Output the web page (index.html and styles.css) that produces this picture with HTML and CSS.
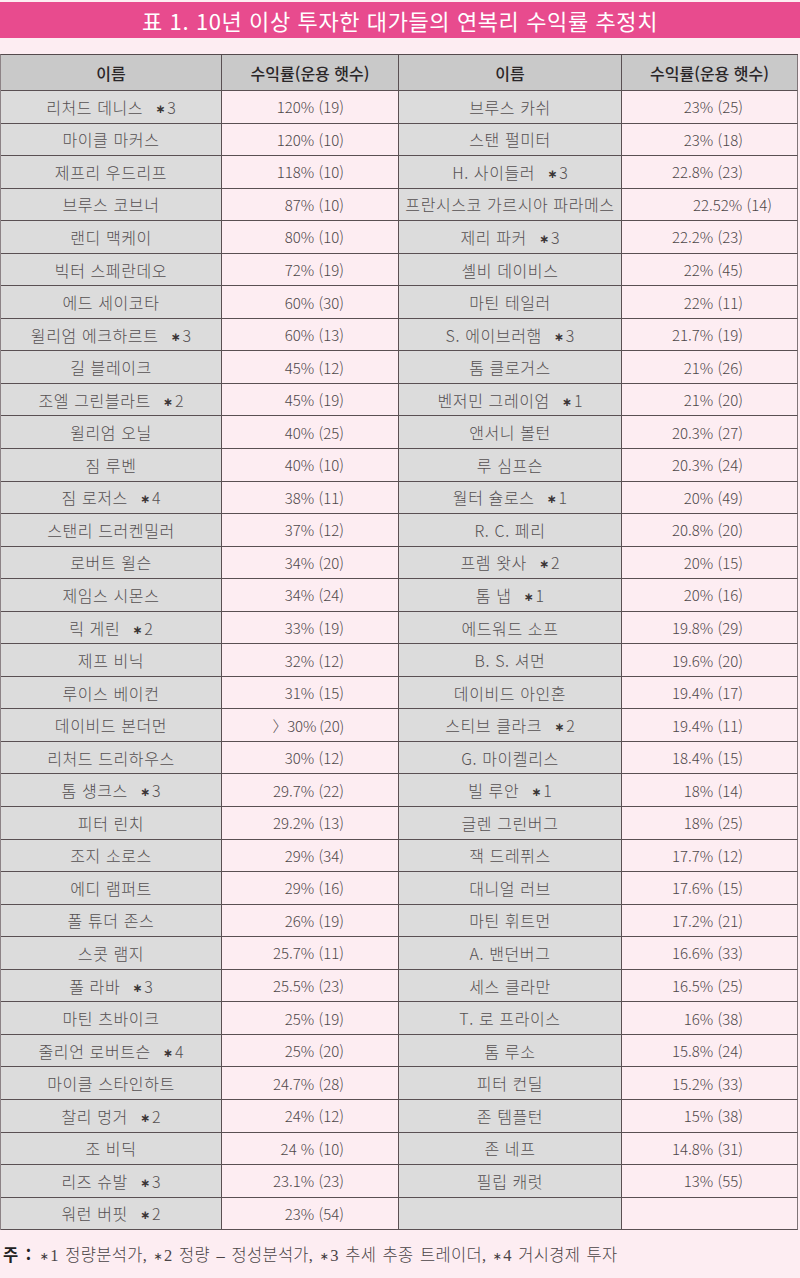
FILE: index.html
```html
<!DOCTYPE html>
<html lang="ko">
<head>
<meta charset="utf-8">
<title>표 1</title>
<link rel="stylesheet" href="styles.css">
</head>
<body>
<div class="page">
  <h1 class="title">표 1. 10년 이상 투자한 대가들의 연복리 수익률 추정치</h1>
  <div class="tbl" id="tbl">
    <div class="th">이름</div><div class="th">수익률(운용 햇수)</div><div class="th">이름</div><div class="th">수익률(운용 햇수)</div>
  </div>
  <p class="note"><b>주 :</b> <span class="ser"><span class="ast">∗</span>1 정량분석가, <span class="ast">∗</span>2 정량 – 정성분석가, <span class="ast">∗</span>3 추세 추종 트레이더, <span class="ast">∗</span>4 거시경제 투자</span></p>
</div>
<script src="app.js"></script>
</body>
</html>
```

FILE: app.js
```js
const left = [
  ["리처드 데니스", "3", "120% (19)"],
  ["마이클 마커스", "", "120% (10)"],
  ["제프리 우드리프", "", "118% (10)"],
  ["브루스 코브너", "", "87% (10)"],
  ["랜디 맥케이", "", "80% (10)"],
  ["빅터 스페란데오", "", "72% (19)"],
  ["에드 세이코타", "", "60% (30)"],
  ["윌리엄 에크하르트", "3", "60% (13)"],
  ["길 블레이크", "", "45% (12)"],
  ["조엘 그린블라트", "2", "45% (19)"],
  ["윌리엄 오닐", "", "40% (25)"],
  ["짐 루벤", "", "40% (10)"],
  ["짐 로저스", "4", "38% (11)"],
  ["스탠리 드러켄밀러", "", "37% (12)"],
  ["로버트 윌슨", "", "34% (20)"],
  ["제임스 시몬스", "", "34% (24)"],
  ["릭 게린", "2", "33% (19)"],
  ["제프 비닉", "", "32% (12)"],
  ["루이스 베이컨", "", "31% (15)"],
  ["데이비드 본더먼", "", "〉30% (20)", "gt"],
  ["리처드 드리하우스", "", "30% (12)"],
  ["톰 섕크스", "3", "29.7% (22)"],
  ["피터 린치", "", "29.2% (13)"],
  ["조지 소로스", "", "29% (34)"],
  ["에디 램퍼트", "", "29% (16)"],
  ["폴 튜더 존스", "", "26% (19)"],
  ["스콧 램지", "", "25.7% (11)"],
  ["폴 라바", "3", "25.5% (23)"],
  ["마틴 츠바이크", "", "25% (19)"],
  ["줄리언 로버트슨", "4", "25% (20)"],
  ["마이클 스타인하트", "", "24.7% (28)"],
  ["찰리 멍거", "2", "24% (12)"],
  ["조 비딕", "", "24 % (10)"],
  ["리즈 슈발", "3", "23.1% (23)"],
  ["워런 버핏", "2", "23% (54)"]
];
const right = [
  ["브루스 카쉬", "", "23% (25)"],
  ["스탠 펄미터", "", "23% (18)"],
  ["H. 사이들러", "3", "22.8% (23)"],
  ["프란시스코 가르시아 파라메스", "", "22.52% (14)", "wide"],
  ["제리 파커", "3", "22.2% (23)"],
  ["셸비 데이비스", "", "22% (45)"],
  ["마틴 테일러", "", "22% (11)"],
  ["S. 에이브러햄", "3", "21.7% (19)"],
  ["톰 클로거스", "", "21% (26)"],
  ["벤저민 그레이엄", "1", "21% (20)"],
  ["앤서니 볼턴", "", "20.3% (27)"],
  ["루 심프슨", "", "20.3% (24)"],
  ["월터 슐로스", "1", "20% (49)"],
  ["R. C. 페리", "", "20.8% (20)"],
  ["프렘 왓사", "2", "20% (15)"],
  ["톰 냅", "1", "20% (16)"],
  ["에드워드 소프", "", "19.8% (29)"],
  ["B. S. 셔먼", "", "19.6% (20)"],
  ["데이비드 아인혼", "", "19.4% (17)"],
  ["스티브 클라크", "2", "19.4% (11)"],
  ["G. 마이켈리스", "", "18.4% (15)"],
  ["빌 루안", "1", "18% (14)"],
  ["글렌 그린버그", "", "18% (25)"],
  ["잭 드레퓌스", "", "17.7% (12)"],
  ["대니얼 러브", "", "17.6% (15)"],
  ["마틴 휘트먼", "", "17.2% (21)"],
  ["A. 밴던버그", "", "16.6% (33)"],
  ["세스 클라만", "", "16.5% (25)"],
  ["T. 로 프라이스", "", "16% (38)"],
  ["톰 루소", "", "15.8% (24)"],
  ["피터 컨딜", "", "15.2% (33)"],
  ["존 템플턴", "", "15% (38)"],
  ["존 네프", "", "14.8% (31)"],
  ["필립 캐럿", "", "13% (55)"],
  ["", "", ""]
];
const tbl = document.getElementById("tbl");
function nameCell(r) {
  const d = document.createElement("div");
  d.className = "cell name";
  d.textContent = r[0];
  if (r[1]) {
    const s = document.createElement("span");
    s.className = "mark";
    const a = document.createElement("span");
    a.className = "ast";
    a.textContent = "∗";
    s.appendChild(a);
    s.appendChild(document.createTextNode(r[1]));
    d.appendChild(s);
  }
  return d;
}
function valCell(r) {
  const d = document.createElement("div");
  d.className = "cell val" + (r[3] ? " " + r[3] : "");
  d.textContent = r[2];
  return d;
}
for (let i = 0; i < left.length; i++) {
  tbl.appendChild(nameCell(left[i]));
  tbl.appendChild(valCell(left[i]));
  tbl.appendChild(nameCell(right[i]));
  tbl.appendChild(valCell(right[i]));
}
```

FILE: styles.css
```css
html, body {
  margin: 0;
  padding: 0;
  background: #fdedf2;
}
body {
  font-family: "Noto Sans CJK KR", "Noto Sans", sans-serif;
  color: #4d4749;
}
.page {
  width: 800px;
  padding-top: 2px;
}
.title {
  margin: 0;
  height: 36px;
  line-height: 36px;
  background: #e84b8e;
  color: #fff;
  font-size: 22px;
  font-weight: 400;
  text-align: center;
  letter-spacing: 0.6px;
}
.tbl {
  margin-top: 16px;
  display: grid;
  grid-template-columns: 221px 177px 223px 176px;
  grid-template-rows: 36px;
  grid-auto-rows: 32.55px;
  border-top: 1.5px solid #544a4d;
  border-left: 1.5px solid #8d8386;
  width: 797px;
}
.th, .cell {
  border-right: 1.2px solid #5a5053;
  border-bottom: 1.2px solid #5a5053;
  display: flex;
  align-items: center;
  justify-content: center;
  white-space: nowrap;
}
.th {
  background: #c9c9c9;
  color: #2a2628;
  font-weight: 500;
  font-size: 16px;
}
.name {
  background: #dcdcdc;
  font-size: 16px;
  font-weight: 300;
  letter-spacing: 0.6px;
  color: #555052;
}
.val {
  background: #fdedf2;
  justify-content: flex-end;
  padding-right: 54px;
  font-size: 15px;
  font-weight: 300;
  color: #4d4749;
}
.val.wide {
  padding-right: 25px;
}
.val.gt {
  letter-spacing: -0.2px;
}
.tbl > :nth-child(4n) {
  border-right-width: 1.5px;
  border-right-color: #7f7578;
}
.mark {
  margin-left: 12px;
  letter-spacing: 0;
}
.ast {
  font-family: "DejaVu Sans", sans-serif;
  font-weight: 700;
  font-size: 12px;
  color: #3a3536;
  margin-right: 2px;
  position: relative;
  top: -1px;
}
.note {
  margin: 12px 0 0 3px;
  font-size: 16.5px;
  color: #333;
}
.note b {
  font-weight: 700;
  color: #222;
  margin-right: 4px;
  word-spacing: 3px;
}
.ser {
  font-family: "Liberation Serif", "Noto Sans CJK KR", serif;
  font-weight: 300;
  color: #4a4446;
  word-spacing: 2px;
  letter-spacing: 0.3px;
}
.ser .ast {
  font-size: 11px;
  font-weight: 400;
  margin-right: 1px;
}
```
